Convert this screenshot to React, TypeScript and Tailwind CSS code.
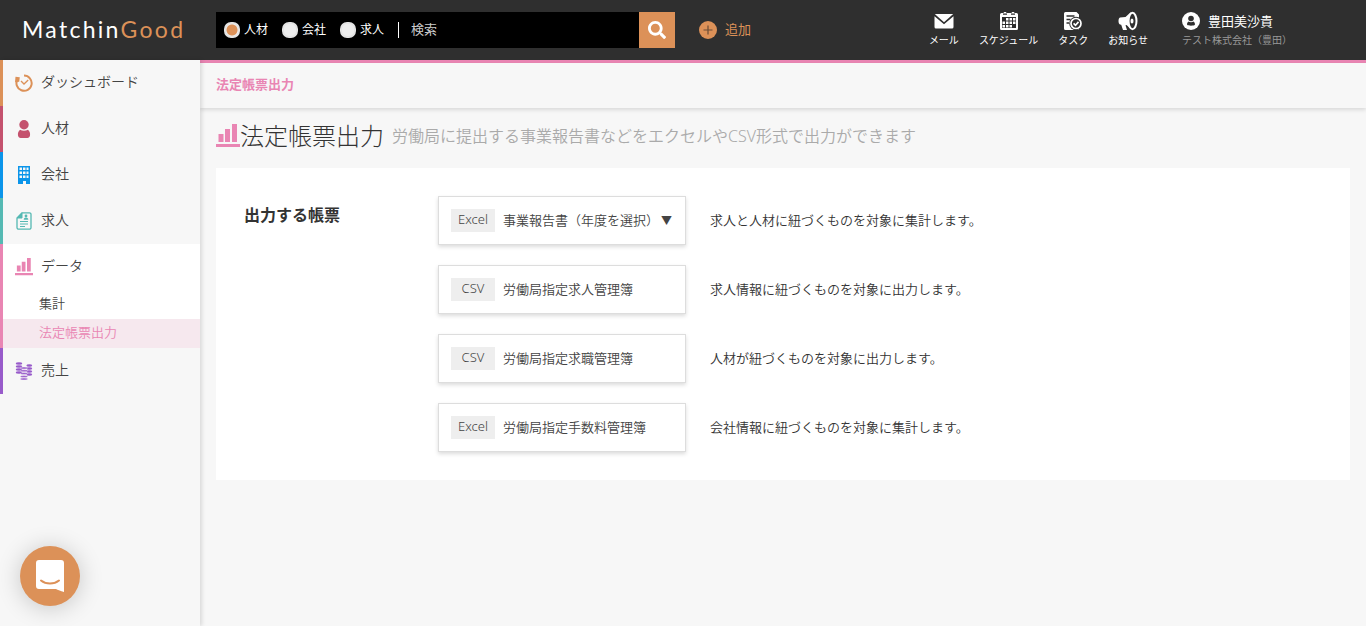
import React from 'react';
import { FaSearch } from 'react-icons/fa';

type IconProps = { className?: string };

const DashboardIcon = ({ className }: IconProps) => (
  <svg viewBox="0 0 18 18" className={className} fill="none" stroke="currentColor">
    <path d="M2.600 5.200A7.600 7.600 0 1 0 9 1.600" strokeWidth="2" />
    <path d="M6 7l3 3 4.200-4" strokeWidth="1.300" />
    <path d="M.5 2.800l4.300.4-.6 4.600L0 8.200z" fill="currentColor" stroke="none" />
  </svg>
);

const PersonIcon = ({ className }: IconProps) => (
  <svg viewBox="0 0 18 18" className={className} fill="currentColor">
    <circle cx="9" cy="4.700" r="4.700" />
    <path d="M5 9.800c2.400 1.300 5.600 1.300 8 0 1.600 1.400 2.400 3.200 2 5.700-.3 1.600-1.200 2.500-2.600 2.500H5.600c-1.400 0-2.300-.9-2.600-2.500-.4-2.500.4-4.300 2-5.700z" />
  </svg>
);

const BuildingIcon = ({ className }: IconProps) => (
  <svg viewBox="0 0 18 18" className={className} fill="currentColor">
    <path
      fillRule="evenodd"
      d="M3 0h12v18h-4v-3H8v3H3zM4.500 1.500v2.500h2.500V1.500zm3.500 0v2.500h2.500V1.500zm3.500 0v2.500h2V1.500zM4.500 5.500V8h2.500V5.500zm3.500 0V8h2.500V5.500zm3.500 0V8h2V5.500zm-7 4V12h2.500V9.500zm3.500 0V12h2.500V9.500zm3.500 0V12h2V9.500z"
    />
  </svg>
);

const DocumentIcon = ({ className }: IconProps) => (
  <svg viewBox="0 0 18 18" className={className} fill="none" stroke="currentColor">
    <path d="M7 .8h7.500a1.500 1.500 0 0 1 1.500 1.500v13.200a1.700 1.700 0 0 1-1.700 1.700H3.700A1.700 1.700 0 0 1 2 15.500V6z" strokeWidth="1.300" />
    <path d="M7 .8V6H2z" fill="currentColor" />
    <path d="M5 9.500h8M5 12h8M5 14.500h5" strokeWidth="1" />
    <circle cx="11" cy="4" r="1.400" fill="currentColor" stroke="none" />
    <path d="M8.700 7.800c0-3 4.600-3 4.600 0z" fill="currentColor" stroke="none" />
  </svg>
);

const ChartIcon = ({ className }: IconProps) => (
  <svg viewBox="0 0 24 24" className={className} fill="currentColor">
    <path d="M0 20h24v3H0zM2.500 10h5v8h-5zM9 5h5v13H9zM16 0h5v18h-5z" />
  </svg>
);

const CoinsIcon = ({ className }: IconProps) => (
  <svg viewBox="0 0 18 18" className={className} fill="currentColor">
    {[1.500, 4.500, 7.500, 10.500].map(y => (
      <ellipse key={`l${y}`} cx="4" cy={y} rx="3.200" ry="1.200" />
    ))}
    {[3.500, 6.500, 9.500, 12.500].map(y => (
      <ellipse key={`r${y}`} cx="14.300" cy={y} rx="2.900" ry="1.200" />
    ))}
    {[6, 8.800, 11.600, 14.400, 17].map(y => (
      <ellipse key={`c${y}`} cx="9" cy={y} rx="3.600" ry="1" stroke="#f7f7f7" strokeWidth="0.400" />
    ))}
  </svg>
);

const MailIcon = ({ className }: IconProps) => (
  <svg viewBox="0 0 20 20" className={className} fill="currentColor">
    <path d="M.8 3h18.400L10 11.200z" />
    <path d="M.5 5.200l9.500 8 9.500-8V16a1.500 1.500 0 0 1-1.500 1.500H2A1.500 1.500 0 0 1 .5 16z" />
  </svg>
);

const CalendarIcon = ({ className }: IconProps) => (
  <svg viewBox="0 0 20 20" className={className} fill="currentColor">
    <path
      fillRule="evenodd"
      d="M2.500 2h15A1.500 1.500 0 0 1 19 3.500v14a1.500 1.500 0 0 1-1.500 1.500h-15A1.500 1.500 0 0 1 1 17.500v-14A1.500 1.500 0 0 1 2.500 2zM3 6v11h14V6z"
    />
    <path d="M7 7h2.500v2.500H7zm3.500 0H13v2.500h-2.500zM14 7h2.500v2.500H14zM3.500 10.500H6V13H3.500zm3.500 0h2.500V13H7zm3.500 0H13V13h-2.500zm3.500 0h2.500V13H14zM3.500 14H6v2.500H3.500zM7 14h2.500v2.500H7zm3.500 0H13v2.500h-2.500z" />
    <path d="M6 0v4M14 0v4" stroke="#2f2f2f" strokeWidth="4" />
    <path d="M5 3.500V1.500h2v2M13 3.500V1.500h2v2" fill="none" stroke="currentColor" strokeWidth="1" />
  </svg>
);

const TaskIcon = ({ className }: IconProps) => (
  <svg viewBox="0 0 20 20" className={className} fill="currentColor">
    <path d="M2.500 1h11l2.500 2.500V19H2.500A1.500 1.500 0 0 1 1 17.500v-15A1.500 1.500 0 0 1 2.500 1z" />
    <path d="M3.500 5h8M3.500 8.500h4M3.500 12h2.500" stroke="#2f2f2f" strokeWidth="1.400" />
    <circle cx="13" cy="12.500" r="6.800" fill="#2f2f2f" />
    <circle cx="13" cy="12.500" r="5" fill="none" stroke="currentColor" strokeWidth="1.700" />
    <path d="M10.600 12.400l1.900 1.900 3-3.400" fill="none" stroke="currentColor" strokeWidth="1.700" />
  </svg>
);

const MegaphoneIcon = ({ className }: IconProps) => (
  <svg viewBox="0 0 20 20" className={className} fill="currentColor">
    <path d="M2 6.500L7.500 6 13 1c-2.500 5-2.500 12 0 17l-4.500-4-1 .2L9 19H5l-1.800-5.200L2 13.500C0 13 0 7 2 6.500z" />
    <ellipse cx="14.500" cy="10" rx="4" ry="8.200" fill="none" stroke="currentColor" strokeWidth="2" />
    <ellipse cx="14" cy="10" rx="1.500" ry="2.500" />
  </svg>
);

const UserIcon = ({ className }: IconProps) => (
  <svg viewBox="0 0 18 18" className={className}>
    <circle cx="9" cy="9" r="9" fill="#fff" />
    <circle cx="9" cy="6.500" r="2.800" fill="#2f2f2f" />
    <path d="M6.500 9.400c1.500 1 3.500 1 5 0 1.200 1 1.600 2 1.400 3.400-1 1.200-6.800 1.200-7.800 0-.2-1.400.2-2.400 1.400-3.400z" fill="#2f2f2f" />
  </svg>
);

const searchTypes = ['人材', '会社', '求人'];

const headerLinks = [
  { label: 'メール', icon: MailIcon },
  { label: 'スケジュール', icon: CalendarIcon },
  { label: 'タスク', icon: TaskIcon },
  { label: 'お知らせ', icon: MegaphoneIcon },
];

const menus = [
  { label: 'ダッシュボード', icon: DashboardIcon, border: 'border-[#dc9158]', color: 'text-[#dc9158]' },
  { label: '人材', icon: PersonIcon, border: 'border-[#c4526e]', color: 'text-[#c4526e]' },
  { label: '会社', icon: BuildingIcon, border: 'border-[#0b95ea]', color: 'text-[#0b95ea]' },
  { label: '求人', icon: DocumentIcon, border: 'border-[#55b9b3]', color: 'text-[#55b9b3]' },
  {
    label: 'データ',
    icon: ChartIcon,
    border: 'border-[#e985b3] bg-white',
    color: 'text-[#e985b3]',
    children: ['集計', '法定帳票出力'],
  },
  { label: '売上', icon: CoinsIcon, border: 'border-[#985bca]', color: 'text-[#985bca]' },
];

const reports = [
  { type: 'Excel', name: '事業報告書（年度を選択）', text: '求人と人材に紐づくものを対象に集計します。', menu: true },
  { type: 'CSV', name: '労働局指定求人管理簿', text: '求人情報に紐づくものを対象に出力します。' },
  { type: 'CSV', name: '労働局指定求職管理簿', text: '人材が紐づくものを対象に出力します。' },
  { type: 'Excel', name: '労働局指定手数料管理簿', text: '会社情報に紐づくものを対象に集計します。' },
];

const Header = () => {
  const [searchType, setSearchType] = React.useState('人材');

  return (
    <header className="flex h-[60px] items-center bg-[#2f2f2f] font-normal text-white">
      <a href="#" className="w-[216px] shrink-0 pb-0.5 pl-[22px] font-['Lato'] text-[23px] tracking-widest">
        Matchin<span className="text-[#dc9158]">Good</span>
      </a>
      <form className="flex h-9 w-[459px] items-center bg-black" onSubmit={event => event.preventDefault()}>
        <div className="flex gap-[14px] pl-2 text-xs">
          {searchTypes.map(type => (
            <label key={type} className="flex items-center gap-1">
              <input
                type="radio"
                name="searchType"
                checked={searchType === type}
                onChange={() => setSearchType(type)}
                className="size-4 appearance-none rounded-[7px] border-2 border-[#e4e4e4] bg-[#eee] checked:bg-[radial-gradient(circle,#dc9158_5px,#eee_6px)]"
              />
              <span className="pb-px">{type}</span>
            </label>
          ))}
        </div>
        <span className="mr-3 ml-[14px] h-4 w-px bg-white" />
        <input
          type="text"
          aria-label="検索"
          placeholder="検索"
          className="h-full min-w-0 flex-1 pb-0.5 text-[13px] outline-none placeholder:text-[#ccc]"
        />
        <button type="submit" aria-label="検索" className="flex size-9 items-center justify-center bg-[#dc9158]">
          <FaSearch className="size-[18px]" />
        </button>
      </form>
      <button className="ml-6 flex items-center gap-2 text-[13px] text-[#dc9158]">
        <svg viewBox="0 0 18 18" className="size-[18px]">
          <circle cx="9" cy="9" r="9" fill="#dc9158" />
          <path d="M9 4.500v9M4.500 9h9" stroke="#6b4c36" strokeWidth="1.200" />
        </svg>
        <span className="pb-px">追加</span>
      </button>
      <nav className="ml-auto flex gap-5 pb-0.5 text-[10px]">
        {headerLinks.map(({ label, icon: Icon }) => (
          <a key={label} href="#" className="flex flex-col items-center gap-0.5 leading-[14px]">
            <Icon className="size-5" />
            {label}
          </a>
        ))}
      </nav>
      <a href="#" className="mr-[74px] ml-[34px] flex flex-col gap-0.5 pb-0.5">
        <span className="flex items-center gap-2 text-[13px] leading-5">
          <UserIcon className="size-[18px]" />
          豊田美沙貴
        </span>
        <span className="text-[10px] leading-[14px] text-[#999]">テスト株式会社（豊田）</span>
      </a>
    </header>
  );
};

const Sidebar = () => (
  <nav className="z-10 w-[200px] shrink-0 bg-[#f7f7f7] text-[#444] shadow-[2px_0_4px_rgba(0,0,0,0.12)]">
    {menus.map(({ label, icon: Icon, border, color, children }) => (
      <div key={label} className={`border-l-3 ${border}`}>
        <a href="#" className="flex h-[46px] items-center gap-2 pl-3 text-sm">
          <Icon className={`size-[18px] ${color}`} />
          <span className="pb-0.5">{label}</span>
        </a>
        {children?.map(child => (
          <a
            key={child}
            href="#"
            className={`flex h-[29px] items-center pb-0.5 pl-9 text-[13px] ${
              child === '法定帳票出力' ? 'bg-[#f6e8ee] text-[#e985b3]' : ''
            }`}
          >
            {child}
          </a>
        ))}
      </div>
    ))}
  </nav>
);

const App = () => {
  return (
    <div className="flex min-h-screen flex-col bg-[#f7f7f7] font-['Noto_Sans','Noto_Sans_CJK_JP',sans-serif] font-[350] text-[#333]">
      <Header />
      <div className="flex flex-1">
        <Sidebar />
        <main className="min-w-0 flex-1 border-t-3 border-[#e985b3]">
          <div className="flex h-[45px] items-center px-4 pb-0.5 text-[13px] font-bold text-[#e985b3] shadow-[0_2px_4px_rgba(0,0,0,0.12)]">
            法定帳票出力
          </div>
          <div className="flex h-[60px] items-center px-4 pb-1">
            <ChartIcon className="size-6 text-[#e985b3]" />
            <h1 className="text-2xl font-light">法定帳票出力</h1>
            <p className="ml-2 text-base text-[#aaa]">
              労働局に提出する事業報告書などをエクセルやCSV形式で出力ができます
            </p>
          </div>
          <section className="mx-4 flex bg-white p-7">
            <h2 className="w-[194px] shrink-0 pt-2 text-base leading-[22px] font-bold">出力する帳票</h2>
            <ul className="space-y-5 text-[13px]">
              {reports.map(report => (
                <li key={report.name} className="flex items-center gap-6">
                  <button
                    aria-haspopup={report.menu ? 'menu' : undefined}
                    className="flex h-[49px] w-[248px] items-center gap-2 border border-[#ddd] bg-white px-3 text-[#444] shadow-[0_2px_4px_rgba(0,0,0,0.14)]"
                  >
                    <span className="w-11 bg-[#eee] pb-0.5 text-center leading-[21px]">{report.type}</span>
                    <span className="whitespace-nowrap">
                      {report.name}
                      {report.menu && <span className="ml-0.5 text-[11px]">▼</span>}
                    </span>
                  </button>
                  <p>{report.text}</p>
                </li>
              ))}
            </ul>
          </section>
        </main>
      </div>
      <button
        aria-label="チャット"
        className="fixed bottom-5 left-5 z-20 flex size-[60px] items-center justify-center rounded-full bg-[#dc9158] shadow-[0_2px_24px_rgba(0,0,0,0.2)]"
      >
        <svg viewBox="0 0 28 32" className="h-8 w-7">
          <path d="M3 0h22a3 3 0 0 1 3 3v29s-4-1.200-8-3H3a3 3 0 0 1-3-3V3a3 3 0 0 1 3-3z" fill="#fff" />
          <path d="M5 20.500c5 4 13 4 18 0" fill="none" stroke="#dc9158" strokeWidth="2" strokeLinecap="round" />
        </svg>
      </button>
    </div>
  );
};

export default App;
